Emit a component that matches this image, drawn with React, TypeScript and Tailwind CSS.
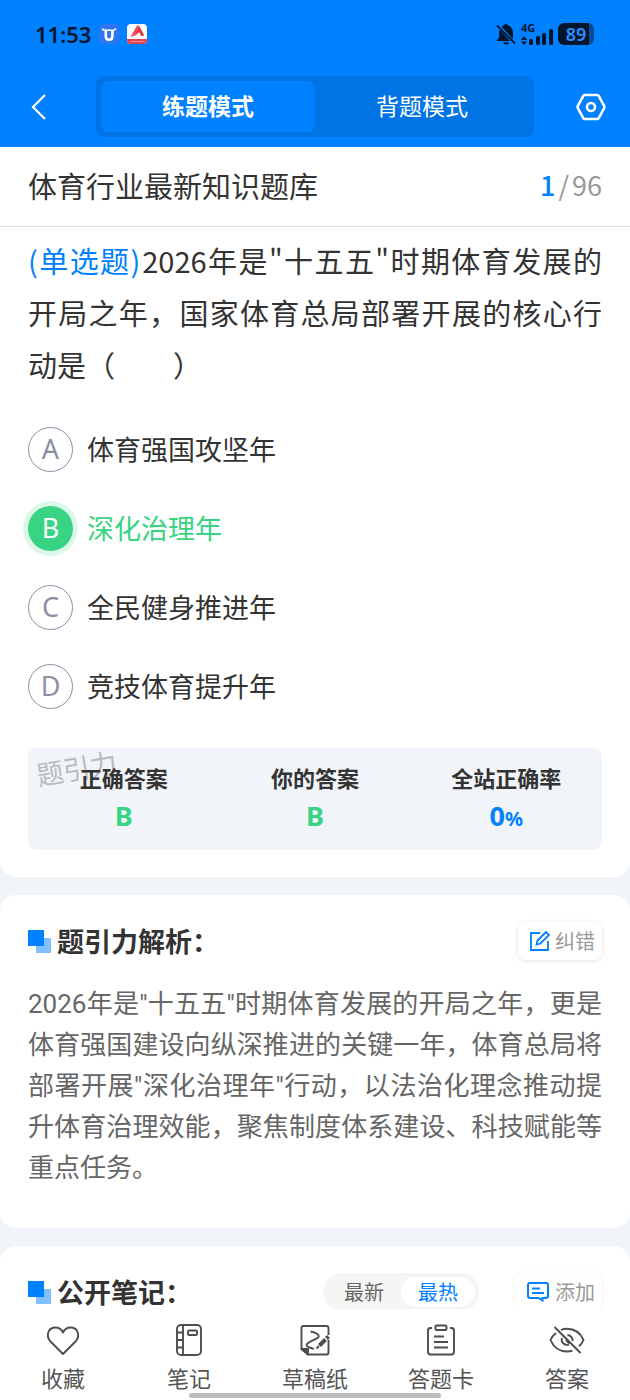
import { useState } from "react";
import type { ReactNode } from "react";

const options = [
  { key: "A", text: "体育强国攻坚年" },
  { key: "B", text: "深化治理年" },
  { key: "C", text: "全民健身推进年" },
  { key: "D", text: "竞技体育提升年" },
];

const correct = "B";

function StatusBar() {
  return (
    <div className="flex h-[68px] items-center justify-between pr-9 pl-[35px] text-[#04162e]">
      <div className="flex items-center gap-2">
        <span className="font-['Noto_Sans'] text-[22px] leading-6 font-semibold">
          11:53
        </span>
        <svg className="size-5" viewBox="0 0 20 20" fill="none">
          <rect width="20" height="20" rx="4" fill="#2f74f0" />
          <path d="M3 4.500 5 6.300h10l2-1.800" stroke="#fff" strokeWidth="1.600" />
          <path
            d="M6.800 5.500v6.700c0 2.400 1.200 3.600 3.300 3.600s3.300-1.200 3.300-3.600V6"
            stroke="#fff"
            strokeWidth="2.600"
          />
        </svg>
        <svg className="size-5" viewBox="0 0 20 20" fill="none">
          <rect width="20" height="20" rx="4" fill="#fff" />
          <path d="M0 15h20v1a4 4 0 0 1-4 4H4a4 4 0 0 1-4-4z" fill="#e8404c" />
          <path d="M3.500 13 10 1.500h2L9.500 11z" fill="#f0505c" />
          <path d="m12 1.500 5 9.500c-.5 1.500-2.500 1.500-3.200.2L12.600 8.500 9 10z" fill="#e63340" />
          <path d="M4 17.500h12.500" stroke="#fbb" strokeWidth="1.200" strokeDasharray="1.500 .5" />
        </svg>
      </div>

      <div className="flex items-center gap-[5px]">
        <svg className="h-[22px] w-5" viewBox="0 0 20 22" fill="currentColor">
          <path d="M10 1c-1 0-1.600.6-1.600 1.300C7.300 2.600 6.400 3 5.700 3.700L17 16.500V9.500c0-3.500-2-6.400-5.400-7.200C11.600 1.600 11 1 10 1z" />
          <path d="M3.900 6.600C3.300 7.500 3.100 8.500 3.100 9.600v4.600L1 17v1h13z" />
          <path d="M7 19.200h6c-.5 1.500-1.500 2.200-3 2.200s-2.500-.7-3-2.200z" />
          <path d="m1 2.500 18 18" stroke="currentColor" strokeWidth="1.800" />
        </svg>
        <div className="flex w-8 flex-col">
          <span className="font-['Noto_Sans'] text-[11px] leading-[10px] font-bold">
            4G
          </span>
          <svg className="-mt-1 h-4 w-8" viewBox="0 0 32 16" fill="currentColor">
            <path d="M0 11l3-4 3 4zM0 12.500h6l-3 3.500z" />
            <rect x="8" y="10" width="4" height="6" rx="1.500" />
            <rect x="15" y="7" width="4" height="9" rx="1.500" />
            <rect x="21" y="4" width="4" height="12" rx="1.500" />
            <rect x="28" y="0" width="4" height="16" rx="1.500" />
          </svg>
        </div>
        <div className="flex h-[22px] w-9 items-center justify-center rounded-md bg-linear-to-r from-[#04162e] from-86% to-[#0a4c94] to-86% font-['Noto_Sans'] text-lg leading-none font-semibold text-[#2f8dff]">
          89
        </div>
      </div>
    </div>
  );
}

function Header() {
  const [mode, setMode] = useState("练题模式");

  return (
    <header className="shrink-0 bg-[#0081ff] pb-[10px]">
      <StatusBar />
      <div className="mt-2 flex items-center gap-[42px] px-6">
        <button aria-label="返回" className="flex w-[30px] justify-center">
          <svg className="h-7 w-5" viewBox="0 0 20 28" fill="none">
            <path d="M16 2 4 14l12 12" stroke="#fff" strokeWidth="2.200" />
          </svg>
        </button>
        <div className="flex flex-1 rounded-lg bg-[#0074e5] p-[5px]">
          {["练题模式", "背题模式"].map((item) => (
            <button
              key={item}
              onClick={() => setMode(item)}
              className={
                mode === item
                  ? "h-[51px] flex-1 rounded-lg bg-[#0081ff] pb-[2px] text-[23px] font-bold text-white"
                  : "h-[51px] flex-1 rounded-lg pb-[2px] text-[23px] text-white"
              }
            >
              {item}
            </button>
          ))}
        </div>
        <button aria-label="设置" className="w-[30px]">
          <svg className="h-7 w-[30px]" viewBox="0 0 30 28" fill="none" stroke="#fff" strokeWidth="2.600">
            <path d="M8.800 2h12.400q1 0 1.500.9l5.500 10.100q.5 1 0 2l-5.500 10.100q-.5.9-1.500.9H8.800q-1 0-1.500-.9L1.800 15q-.5-1 0-2L7.300 2.900Q7.800 2 8.800 2z" />
            <circle cx="15" cy="14" r="4" />
          </svg>
        </button>
      </div>
    </header>
  );
}

function Options() {
  const [answer, setAnswer] = useState(correct);

  return (
    <div className="relative mt-[37px] flex flex-col gap-[34px]">
      {options.map((item) => {
        const active = answer === item.key;
        return (
          <label key={item.key} className="flex items-center gap-[14px]">
            <input
              type="radio"
              name="answer"
              className="sr-only"
              checked={active}
              onChange={() => setAnswer(item.key)}
            />
            <span
              className={
                active
                  ? "flex size-[45px] items-center justify-center rounded-full bg-[#38d383] font-['Noto_Sans'] text-[27px] text-white ring-5 ring-[#dcf8e9]"
                  : "flex size-[45px] items-center justify-center rounded-full border border-[#8c8fa3] font-['Noto_Sans'] text-[27px] text-[#8c8fa3]"
              }
            >
              {item.key}
            </span>
            <span
              className={
                active
                  ? "pb-[2px] text-[27px] leading-[43px] text-[#38d383]"
                  : "pb-[2px] text-[27px] leading-[43px]"
              }
            >
              {item.text}
            </span>
          </label>
        );
      })}
    </div>
  );
}

function Results() {
  return (
    <dl className="relative mt-[39px] grid h-[102px] grid-cols-3 rounded-lg bg-[#f1f5f9] pt-[14px] text-center">
      <div
        aria-hidden="true"
        className="absolute top-0 left-2 -rotate-10 text-[27px] leading-10 text-[#b9bcbf]"
      >
        题引力
      </div>
      <div className="relative">
        <dt className="text-[22px] leading-[30px] font-bold">正确答案</dt>
        <dd className="mt-[6px] font-['Noto_Sans'] text-[27px] leading-9 font-bold text-[#38d383]">
          B
        </dd>
      </div>
      <div className="h-14 border-x border-[#edf0f5]">
        <dt className="text-[22px] leading-[30px] font-bold">你的答案</dt>
        <dd className="mt-[6px] font-['Noto_Sans'] text-[27px] leading-9 font-bold text-[#38d383]">
          B
        </dd>
      </div>
      <div>
        <dt className="text-[22px] leading-[30px] font-bold">全站正确率</dt>
        <dd className="mt-[6px] font-['Noto_Sans'] text-[27px] leading-9 font-bold text-[#0081ff]">
          0<span className="text-xl">%</span>
        </dd>
      </div>
    </dl>
  );
}

function SectionTitle({ title, children }: { title: string; children: ReactNode }) {
  return (
    <div className="flex h-[38px] items-center">
      <svg className="h-[23px] w-[23px]" viewBox="0 0 23 23">
        <path d="M8 8h15v15H8z" fill="#80c0ff" />
        <path d="M0 0h16v16H0z" fill="#0081ff" />
      </svg>
      <h2 className="ml-[6px] flex-1 text-[27px] leading-[38px] font-bold">{title}</h2>
      {children}
    </div>
  );
}

function Notes() {
  const [sort, setSort] = useState("最热");

  return (
    <section className="rounded-t-2xl bg-white px-7 pt-[27px] pb-10">
      <SectionTitle title="公开笔记：">
        <div className="mr-9 flex rounded-full bg-[#f5f5f5] p-1">
          {["最新", "最热"].map((item) => (
            <button
              key={item}
              onClick={() => setSort(item)}
              className={
                sort === item
                  ? "h-[30px] w-[74px] rounded-full bg-white text-xl leading-none text-[#0081ff]"
                  : "h-[30px] w-[74px] rounded-full text-xl leading-none text-[#666]"
              }
            >
              {item}
            </button>
          ))}
        </div>
        <button className="flex h-[38px] items-center gap-[6px] rounded-lg pr-[7px] pl-3 text-xl text-[#999] shadow-[0_1px_5px_rgba(0,0,0,0.07)]">
          <svg className="h-5 w-[22px]" viewBox="0 0 22 20" fill="none" stroke="#0081ff" strokeWidth="2">
            <path d="M3 1h16q2 0 2 2v11q0 2-2 2h-3.500v2.500L11.500 16H3q-2 0-2-2V3q0-2 2-2zM5 6.500h8M5 11h12" />
          </svg>
          添加
        </button>
      </SectionTitle>
    </section>
  );
}

const actions = [
  {
    label: "收藏",
    icon: (
      <path d="M16 30 3 17C-1.500 11 1.500 3.500 8.500 3.500c3.500 0 6 2 7.500 5 1.500-3 4-5 7.500-5 7 0 10 7.500 5.500 13.500z" />
    ),
  },
  {
    label: "笔记",
    icon: (
      <>
        <rect x="4" y="1" width="24" height="30" rx="4" />
        <path d="M10 1v30M4 8.500h6M4 16h6M4 23.500h6" />
        <rect x="15" y="6.500" width="9" height="4.500" rx="1" />
      </>
    ),
  },
  {
    label: "草稿纸",
    icon: (
      <>
        <path d="M29.500 11V4q0-2-2-2h-23q-2 0-2 2v21l6.500 5.500h18.500q2 0 2-2V16" />
        <path d="M2.500 25h6.500v5.500z" fill="currentColor" />
        <path d="M11.500 7.500c4 .5 9.500 3 8 5.500S8 17.500 7.500 21c0 1.800 3.500 2.800 7.500 4" />
        <path d="m20.500 21.500 6-6" strokeWidth="4" />
        <path d="m27.500 14.500 2-2" strokeWidth="4" />
        <path d="m17.500 24.500 2.500-2.500" />
      </>
    ),
  },
  {
    label: "答题卡",
    icon: (
      <>
        <path d="M7 4H5.500q-2.500 0-2.500 2.500v21Q3 30.500 5.500 30.500h21q2.500 0 2.500-3v-21Q29 4 26.500 4H25" />
        <rect x="10.500" y="1.500" width="11" height="4.500" rx="1" />
        <path d="M9 12.500h10M9 18h14M9 23.500h14" />
      </>
    ),
  },
  {
    label: "答案",
    icon: (
      <>
        <path d="M5 9C2.500 11 .5 13.500-.5 16c3 7 8.500 11.500 16.500 11.500 2 0 4-.3 5.500-.9" />
        <path d="M10 6c1.700-.8 3.700-1.200 6-1.200 8 0 13.500 4.500 16.500 11.200-1 2.500-2.500 4.500-4.500 6.200" />
        <path d="M11 14c-1.500 4.500 3 8 7 6.500M16.500 11c3.500.5 5.500 3 5 6M15 16l3.500 3.500" />
        <path d="m3.500 3 26 26" />
      </>
    ),
  },
];

function BottomNav() {
  return (
    <nav className="shrink-0 bg-white pt-[15px] pb-[2px]">
      <div className="flex">
        {actions.map((item) => (
          <button
            key={item.label}
            className="flex flex-1 flex-col items-center gap-[6px] text-[22px] leading-[30px] text-[#555]"
          >
            <svg
              className="size-8 overflow-visible text-[#4d4d4d]"
              viewBox="0 0 32 32"
              fill="none"
              stroke="currentColor"
              strokeWidth="1.900"
              strokeLinejoin="round"
            >
              {item.icon}
            </svg>
            {item.label}
          </button>
        ))}
      </div>
      <div className="mx-auto mt-px h-[5px] w-2/5 rounded-full bg-[#bdbdbd]" />
    </nav>
  );
}

export default function App() {
  return (
    <div
      lang="zh-CN"
      className="flex h-screen flex-col bg-[#f1f5f9] font-['Noto_Sans_CJK_SC',sans-serif] text-[#333]"
    >
      <Header />

      <main className="flex min-h-0 flex-1 flex-col gap-[18px] overflow-y-auto [scrollbar-width:none]">
        <section className="rounded-b-2xl bg-white pb-[27px]">
          <div className="flex h-20 items-center justify-between border-b border-[#ddd] px-7 pb-[3px]">
            <h1 className="text-[29px] leading-10">体育行业最新知识题库</h1>
            <p className="text-[27px] leading-10 text-[#999]">
              <span className="font-medium text-[#0081ff]">1</span>
              <span className="mx-[3px]">/</span>96
            </p>
          </div>

          <div className="px-7 pt-[7px]">
            <p className="text-justify text-[29px] leading-[52px]">
              <span className="mr-0.5 text-[#0081ff]">(单选题)</span>
              2026年是"十五五"时期体育发展的开局之年，国家体育总局部署开展的核心行动是（　　）
            </p>
            <Options />
            <Results />
          </div>
        </section>

        <section className="rounded-2xl bg-white px-7 pt-[27px] pb-[39px]">
          <SectionTitle title="题引力解析：">
            <button className="flex h-[38px] items-center gap-[5px] rounded-lg pr-[7px] pl-3 text-xl text-[#999] shadow-[0_1px_5px_rgba(0,0,0,0.1)]">
              <svg className="h-5 w-5" viewBox="0 0 20 20" fill="none" stroke="#0081ff" strokeWidth="1.800">
                <path d="M10 2H1v17h17v-9" />
                <path d="M7.500 9.500 16 1l3 3-8.500 8.500-4 1z" />
              </svg>
              纠错
            </button>
          </SectionTitle>
          <p className="mt-6 text-justify font-['Roboto','Noto_Sans_CJK_SC',sans-serif] text-[26px] leading-[41px] text-[#666]">
            2026年是"十五五"时期体育发展的开局之年，更是体育强国建设向纵深推进的关键一年，体育总局将部署开展"深化治理年"行动，以法治化理念推动提升体育治理效能，聚焦制度体系建设、科技赋能等重点任务。
          </p>
        </section>

        <Notes />
      </main>

      <BottomNav />
    </div>
  );
}
